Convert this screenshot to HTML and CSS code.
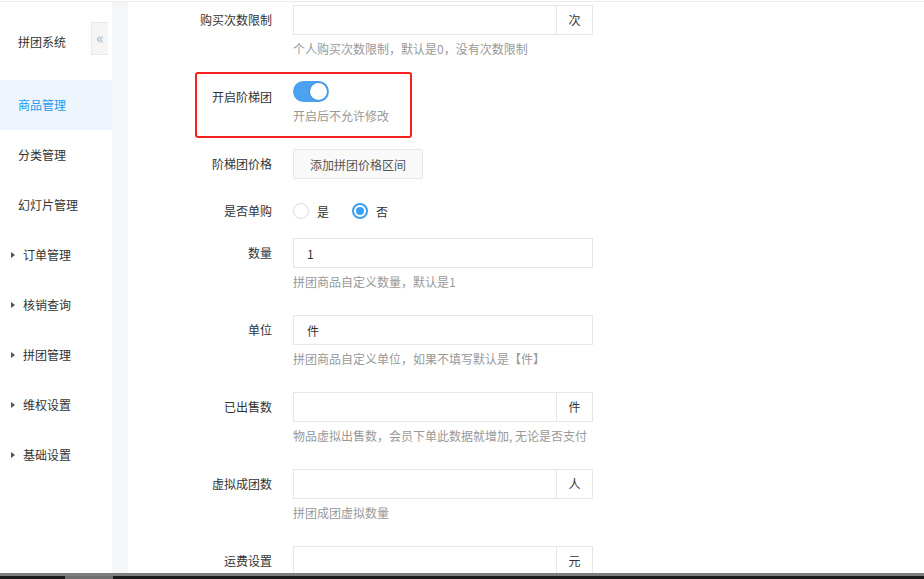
FILE: index.html
```html
<!DOCTYPE html>
<html lang="zh-CN">
<head>
    <meta charset="UTF-8">
    <meta name="viewport" content="width=device-width, initial-scale=1.0">
    <title>商品管理 - 拼团系统</title>
    <link rel="stylesheet" href="styles.css">
</head>
<body>
    <div class="topline"></div>
    <div class="layout">
        <div class="sidebar">
            <div class="brand">拼团系统</div>
            <span class="collapse">&laquo;</span>
            <ul class="menu">
                <li class="active">商品管理</li>
                <li>分类管理</li>
                <li>幻灯片管理</li>
                <li class="group">订单管理</li>
                <li class="group">核销查询</li>
                <li class="group">拼团管理</li>
                <li class="group">维权设置</li>
                <li class="group">基础设置</li>
            </ul>
        </div>
        <div class="gutter"></div>

        <div class="main">
            <form class="form">
                <div class="item">
                    <label class="label">购买次数限制</label>
                    <div class="control">
                        <div class="input-group">
                            <input type="text" class="input">
                            <span class="addon">次</span>
                        </div>
                        <div class="help">个人购买次数限制，默认是0，没有次数限制</div>
                    </div>
                </div>

                <div class="item">
                    <label class="label">开启阶梯团</label>
                    <div class="control">
                        <div class="switch-row">
                            <span class="switch on"><span class="knob"></span></span>
                        </div>
                        <div class="help">开启后不允许修改</div>
                    </div>
                    <div class="mark"></div>
                </div>

                <div class="item item-btn">
                    <label class="label">阶梯团价格</label>
                    <div class="control">
                        <button type="button" class="btn">添加拼团价格区间</button>
                    </div>
                </div>

                <div class="item item-radio">
                    <label class="label">是否单购</label>
                    <div class="control radios">
                        <span class="radio"></span><span class="radio-text">是</span>
                        <span class="radio checked"></span><span class="radio-text">否</span>
                    </div>
                </div>

                <div class="item">
                    <label class="label">数量</label>
                    <div class="control">
                        <div class="input-group">
                            <input type="text" class="input" value="1">
                        </div>
                        <div class="help">拼团商品自定义数量，默认是1</div>
                    </div>
                </div>

                <div class="item">
                    <label class="label">单位</label>
                    <div class="control">
                        <div class="input-group">
                            <input type="text" class="input" value="件">
                        </div>
                        <div class="help">拼团商品自定义单位，如果不填写默认是【件】</div>
                    </div>
                </div>

                <div class="item">
                    <label class="label">已出售数</label>
                    <div class="control">
                        <div class="input-group">
                            <input type="text" class="input">
                            <span class="addon">件</span>
                        </div>
                        <div class="help">物品虚拟出售数，会员下单此数据就增加, 无论是否支付</div>
                    </div>
                </div>

                <div class="item">
                    <label class="label">虚拟成团数</label>
                    <div class="control">
                        <div class="input-group">
                            <input type="text" class="input">
                            <span class="addon">人</span>
                        </div>
                        <div class="help">拼团成团虚拟数量</div>
                    </div>
                </div>

                <div class="item">
                    <label class="label">运费设置</label>
                    <div class="control">
                        <div class="input-group">
                            <input type="text" class="input">
                            <span class="addon">元</span>
                        </div>
                    </div>
                </div>
            </form>
        </div>
    </div>
    <div class="taskbar"><span class="task"></span></div>
</body>
</html>
```

FILE: styles.css
```css
* {
    box-sizing: border-box;
}

html, body {
    margin: 0;
    height: 100%;
    overflow: hidden;
}

body {
    font-family: "Noto Sans CJK SC", "Liberation Sans", sans-serif;
    font-size: 12px;
    color: #333;
    background: #fff;
}

.topline {
    height: 2px;
    border-bottom: 1px solid #ececec;
}

.layout {
    display: flex;
    height: 100%;
}

.sidebar {
    position: relative;
    width: 112px;
    flex-shrink: 0;
}

.brand {
    height: 78px;
    padding: 2px 0 0 18px;
    line-height: 76px;
}

.collapse {
    position: absolute;
    left: 91px;
    top: 20px;
    width: 17px;
    height: 33px;
    background: #f5f5f5;
    border: 1px solid #e9e9e9;
    border-right: none;
    color: #a3b8d0;
    font-size: 16px;
    line-height: 28px;
    text-align: center;
}

.menu {
    list-style: none;
    margin: 0;
    padding: 0;
}

.menu li {
    height: 50px;
    line-height: 50px;
    padding-left: 18px;
}

.menu li.active {
    background: #eef5fd;
    color: #1c9bf5;
}

.menu li.group {
    position: relative;
    padding-left: 23px;
}

.menu li.group::before {
    content: "";
    position: absolute;
    left: 11px;
    top: 22px;
    border-left: 4px solid #555;
    border-top: 3.5px solid transparent;
    border-bottom: 3.5px solid transparent;
}

.gutter {
    width: 16px;
    flex-shrink: 0;
    background: #f5f6f8;
}

.main {
    flex: 1;
    padding-top: 3px;
}

.item {
    position: relative;
    display: flex;
    margin-bottom: 23px;
}

.item-btn {
    margin-bottom: 17px;
}

.item-radio {
    margin-bottom: 12px;
}

.label {
    width: 150px;
    padding-right: 6px;
    line-height: 30px;
    text-align: right;
    flex-shrink: 0;
}

.control {
    margin-left: 15px;
}

.input-group {
    display: flex;
    width: 300px;
    height: 30px;
    border: 1px solid #e6e6e6;
    background: #fff;
}

.input {
    flex: 1;
    min-width: 0;
    border: none;
    outline: none;
    padding: 0 13px;
    font-family: inherit;
    font-size: 12px;
    color: #333;
    background: transparent;
}

.addon {
    width: 36px;
    border-left: 1px solid #e6e6e6;
    line-height: 28px;
    text-align: center;
}

.help {
    margin-top: 4px;
    line-height: 20px;
    color: #999;
}

.switch-row {
    height: 21px;
    margin-top: -1px;
    margin-bottom: 1px;
}

.switch {
    position: relative;
    display: inline-block;
    width: 36px;
    height: 21px;
    border-radius: 11px;
    background: #ccc;
}

.switch.on {
    background: #4aa2f1;
}

.knob {
    position: absolute;
    top: 2px;
    left: 2px;
    width: 17px;
    height: 17px;
    border-radius: 50%;
    background: #fff;
    box-shadow: 0 0 2px rgba(0, 0, 0, 0.25);
}

.switch.on .knob {
    left: 17px;
}

.mark {
    position: absolute;
    left: 67px;
    top: -10px;
    width: 217px;
    height: 66px;
    border: 2px solid #f5211f;
    border-radius: 3px;
}

.btn {
    width: 130px;
    height: 30px;
    padding: 0;
    border: 1px solid #e6e6e6;
    border-radius: 2px;
    background: #f9f9f9;
    font-family: inherit;
    font-size: 12px;
    color: #555;
}

.radios {
    display: flex;
    align-items: center;
    height: 30px;
}

.radio {
    width: 16px;
    height: 16px;
    border: 1px solid #dcdcdc;
    border-radius: 50%;
    background: #fff;
}

.radio.checked {
    border: 2px solid #3aa0f3;
    padding: 2px;
    background: #3aa0f3;
    background-clip: content-box;
}

.radio-text {
    margin: 0 23px 0 8px;
}

.taskbar {
    position: fixed;
    left: 0;
    right: 0;
    bottom: 0;
    height: 6px;
    border-top: 3px solid #7f7f7f;
    background: #1b1b1b;
}

.task {
    position: absolute;
    left: 65px;
    top: 0;
    width: 48px;
    height: 3px;
    background: #6e6e6e;
}
```
